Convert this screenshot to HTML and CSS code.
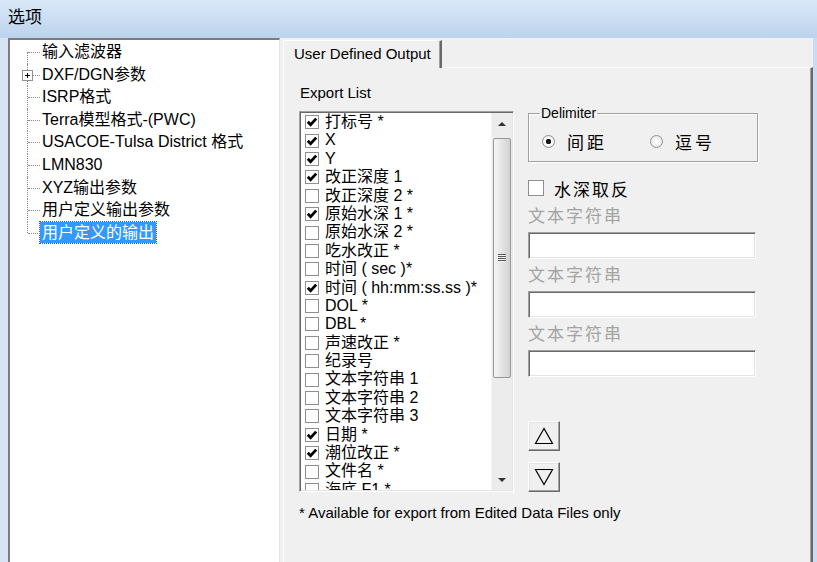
FILE: index.html
```html
<!DOCTYPE html>
<html lang="zh">
<head>
    <meta charset="UTF-8">
    <title>选项</title>
    <link rel="stylesheet" href="styles.css">
</head>
<body>
<div class="window">
    <div class="titlebar">选项</div>

    <div class="client">
        <!-- Options tree -->
        <div class="tree">
            <ul class="tree-list">
                <li>输入滤波器</li>
                <li><span class="expander"></span>DXF/DGN参数</li>
                <li>ISRP格式</li>
                <li>Terra模型格式-(PWC)</li>
                <li>USACOE-Tulsa District 格式</li>
                <li>LMN830</li>
                <li>XYZ输出参数</li>
                <li>用户定义输出参数</li>
                <li><span class="selected">用户定义的输出</span></li>
            </ul>
        </div>

        <!-- Tab control -->
        <div class="tabs">
            <div class="tab-strip">
                <div class="tab">User Defined Output</div>
            </div>
            <div class="tab-page">
                <div class="page-body">
                    <div class="export-col">
                        <div class="group-label">Export List</div>
                        <div class="listbox">
                            <ul class="check-list">
                                <li><span class="cb on"><svg viewBox="0 0 12 12"><path d="M1.8 5.8 L4.6 8.8 L10.2 2.6"/></svg></span>打标号 *</li>
                                <li><span class="cb on"><svg viewBox="0 0 12 12"><path d="M1.8 5.8 L4.6 8.8 L10.2 2.6"/></svg></span>X</li>
                                <li><span class="cb on"><svg viewBox="0 0 12 12"><path d="M1.8 5.8 L4.6 8.8 L10.2 2.6"/></svg></span>Y</li>
                                <li><span class="cb on"><svg viewBox="0 0 12 12"><path d="M1.8 5.8 L4.6 8.8 L10.2 2.6"/></svg></span>改正深度 1</li>
                                <li><span class="cb"></span>改正深度 2 *</li>
                                <li><span class="cb on"><svg viewBox="0 0 12 12"><path d="M1.8 5.8 L4.6 8.8 L10.2 2.6"/></svg></span>原始水深 1 *</li>
                                <li><span class="cb"></span>原始水深 2 *</li>
                                <li><span class="cb"></span>吃水改正 *</li>
                                <li><span class="cb"></span>时间 ( sec )*</li>
                                <li><span class="cb on"><svg viewBox="0 0 12 12"><path d="M1.8 5.8 L4.6 8.8 L10.2 2.6"/></svg></span>时间 ( hh:mm:ss.ss )*</li>
                                <li><span class="cb"></span>DOL *</li>
                                <li><span class="cb"></span>DBL *</li>
                                <li><span class="cb"></span>声速改正 *</li>
                                <li><span class="cb"></span>纪录号</li>
                                <li><span class="cb"></span>文本字符串 1</li>
                                <li><span class="cb"></span>文本字符串 2</li>
                                <li><span class="cb"></span>文本字符串 3</li>
                                <li><span class="cb on"><svg viewBox="0 0 12 12"><path d="M1.8 5.8 L4.6 8.8 L10.2 2.6"/></svg></span>日期 *</li>
                                <li><span class="cb on"><svg viewBox="0 0 12 12"><path d="M1.8 5.8 L4.6 8.8 L10.2 2.6"/></svg></span>潮位改正 *</li>
                                <li><span class="cb"></span>文件名 *</li>
                                <li><span class="cb"></span>海底 F1 *</li>
                            </ul>
                            <div class="scrollbar">
                                <div class="sb-btn"><span class="arrow-up"></span></div>
                                <div class="sb-track">
                                    <div class="sb-thumb"><span class="grip"></span></div>
                                </div>
                                <div class="sb-btn"><span class="arrow-down"></span></div>
                            </div>
                        </div>
                    </div>

                    <div class="side-col">
                        <fieldset class="delimiter">
                            <legend>Delimiter</legend>
                            <div class="radio-row">
                                <div class="option first"><span class="radio on"></span>间距</div>
                                <div class="option"><span class="radio"></span>逗号</div>
                            </div>
                        </fieldset>

                        <div class="check-row"><span class="cb big"></span>水深取反</div>

                        <div class="field">
                            <div class="field-label">文本字符串</div>
                            <div class="textbox"></div>
                        </div>
                        <div class="field">
                            <div class="field-label">文本字符串</div>
                            <div class="textbox"></div>
                        </div>
                        <div class="field">
                            <div class="field-label">文本字符串</div>
                            <div class="textbox"></div>
                        </div>

                        <div class="move-buttons">
                            <button class="move-btn"><svg viewBox="0 0 20 18"><path d="M10 1.5 L1.5 16.5 L18.5 16.5 Z"/></svg></button>
                            <button class="move-btn"><svg viewBox="0 0 20 18"><path d="M10 16.5 L1.5 1.5 L18.5 1.5 Z"/></svg></button>
                        </div>
                    </div>
                </div>

                <p class="note">* Available for export from Edited Data Files only</p>
            </div>
        </div>
    </div>
</div>
</body>
</html>
```

FILE: styles.css
```css
/* General */
* {
    box-sizing: border-box;
}
body {
    margin: 0;
    font-family: "Liberation Sans", "Noto Sans CJK SC", sans-serif;
    color: #000;
    background: #c9dcf1;
    overflow: hidden;
}
.window {
    width: 817px;
    height: 562px;
    display: flex;
    flex-direction: column;
    background: linear-gradient(to right, #d6e4f3, #c3d8ef 40%, #c9dcf1);
}
/* Title bar */
.titlebar {
    height: 38px;
    padding-left: 8px;
    font-size: 17px;
    line-height: 36px;
    background: linear-gradient(#d9e8f8, #bcd3ed);
}
.client {
    flex: 1;
    display: flex;
    margin: 0 4px 0 8px;
    background: #f0f0f0;
}
/* Tree */
.tree {
    width: 272px;
    background: #fff;
    border-top: 2px solid #7c7c7c;
    border-left: 2px solid #7c7c7c;
    border-right: 1px solid #e3e3e3;
    padding-top: 1px;
}
.tree-list {
    list-style: none;
    margin: 0;
    padding: 0;
    font-size: 16px;
}
.tree-list li {
    position: relative;
    height: 22.6px;
    line-height: 22.6px;
    padding-left: 32px;
    white-space: nowrap;
}
.tree-list li::before {
    content: "";
    position: absolute;
    left: 17px;
    top: 0;
    bottom: 0;
    border-left: 1px dotted #8a8a8a;
}
.tree-list li::after {
    content: "";
    position: absolute;
    left: 18px;
    width: 12px;
    top: 11px;
    border-top: 1px dotted #8a8a8a;
}
.tree-list li:first-child::before {
    top: 11px;
}
.tree-list li:last-child::before {
    bottom: 11px;
}
.expander {
    position: absolute;
    left: 12px;
    top: 6px;
    width: 11px;
    height: 11px;
    z-index: 1;
    border: 1px solid #919191;
    background:
        linear-gradient(#000, #000) center / 5px 1px no-repeat,
        linear-gradient(#000, #000) center / 1px 5px no-repeat,
        #fff;
}
.selected {
    display: inline-block;
    margin-left: -2px;
    padding: 0 2px;
    line-height: 21px;
    color: #fff;
    background: #3399ff;
    outline: 1px dotted #7a5020;
}
/* Tabs */
.tabs {
    flex: 1;
    display: flex;
    flex-direction: column;
    margin-left: 3px;
}
.tab-strip {
    height: 29px;
    display: flex;
    align-items: flex-end;
}
.tab {
    position: relative;
    z-index: 1;
    width: 159px;
    height: 28px;
    margin-bottom: -1px;
    padding-left: 10px;
    font-size: 15px;
    line-height: 26px;
    background: #f0f0f0;
    border-top: 1px solid #fff;
    border-left: 1px solid #fff;
    border-right: 2px solid #696969;
    box-shadow: inset -1px 0 0 #a0a0a0;
}
.tab-page {
    flex: 1;
    padding: 16px 0 0 15px;
    border-top: 1px solid #fff;
    border-left: 1px solid #fff;
    border-right: 2px solid #696969;
    box-shadow: inset -1px 0 0 #a0a0a0;
}
.page-body {
    display: flex;
    gap: 14px;
}
/* Export list */
.export-col {
    width: 215px;
}
.group-label {
    padding-left: 1px;
    font-size: 15px;
    line-height: 18px;
}
.listbox {
    display: flex;
    height: 381px;
    margin-top: 9px;
    padding: 1px;
    background: #fff;
    border: 1px solid;
    border-color: #a0a0a0 #fff #fff #a0a0a0;
    box-shadow: inset 1px 1px 0 #696969, inset -1px -1px 0 #e3e3e3;
}
.check-list {
    flex: 1;
    list-style: none;
    margin: 0;
    padding: 0 0 0 4px;
    overflow: hidden;
    font-size: 16px;
}
.check-list li {
    display: flex;
    align-items: center;
    gap: 6px;
    height: 18.4px;
    line-height: 18.4px;
    white-space: nowrap;
}
.cb {
    flex: none;
    width: 14px;
    height: 14px;
    border: 1px solid #8e8f8f;
    background: #fff;
}
.cb svg {
    display: block;
    width: 12px;
    height: 12px;
}
.cb path {
    fill: none;
    stroke: #000;
    stroke-width: 2.8;
}
/* Scrollbar */
.scrollbar {
    width: 21px;
    display: flex;
    flex-direction: column;
    background: #ececec;
    border-left: 1px solid #f4f4f4;
}
.sb-btn {
    height: 21px;
    display: flex;
    align-items: center;
    justify-content: center;
}
.arrow-up {
    border-left: 4px solid transparent;
    border-right: 4px solid transparent;
    border-bottom: 4px solid #333;
}
.arrow-down {
    border-left: 4px solid transparent;
    border-right: 4px solid transparent;
    border-top: 4px solid #333;
}
.sb-track {
    flex: 1;
    padding: 4px 1px 0;
}
.sb-thumb {
    height: 240px;
    display: flex;
    align-items: center;
    justify-content: center;
    border: 1px solid #979797;
    border-radius: 2px;
    background: linear-gradient(to right, #f5f5f5, #e4e4e4 50%, #d2d2d2);
}
.grip {
    width: 8px;
    height: 8px;
    background: repeating-linear-gradient(#555 0 1px, #f4f4f4 1px 2px);
}
/* Right column */
.side-col {
    width: 230px;
    padding-top: 21px;
}
.delimiter {
    margin: 0;
    padding: 10px 0 10px 13px;
    min-width: 0;
    border: 1px solid #a0a0a0;
    box-shadow: inset 1px 1px 0 #fff, 1px 1px 0 #fff;
}
.delimiter legend {
    margin-left: -2px;
    padding: 0 1px;
    font-size: 14px;
    line-height: 16px;
}
.radio-row {
    display: flex;
    height: 20px;
    align-items: center;
}
.option {
    display: flex;
    align-items: center;
    gap: 12px;
    font-size: 17px;
    letter-spacing: 3px;
}
.option.first {
    width: 108px;
}
.radio {
    width: 13px;
    height: 13px;
    border-radius: 50%;
    border: 1px solid #8f8f8f;
    background: radial-gradient(circle, #fff, #e2e2e2);
}
.radio.on {
    background: radial-gradient(circle, #1a1a1a 0 2.5px, #fff 3px, #e2e2e2);
}
.check-row {
    display: flex;
    align-items: center;
    gap: 10px;
    margin-top: 16px;
    height: 20px;
    font-size: 17px;
    letter-spacing: 2px;
}
.cb.big {
    width: 16px;
    height: 16px;
}
.field-label {
    margin-top: 9px;
    font-size: 17px;
    line-height: 20px;
    letter-spacing: 2px;
    color: #a3a3a3;
}
.field + .field .field-label {
    margin-top: 7px;
}
.textbox {
    width: 228px;
    height: 27px;
    margin-top: 5px;
    background: #fff;
    border: 1px solid;
    border-color: #a0a0a0 #fff #fff #a0a0a0;
    box-shadow: inset 1px 1px 0 #696969, inset -1px -1px 0 #e3e3e3;
}
/* Move buttons */
.move-buttons {
    display: flex;
    flex-direction: column;
    gap: 11px;
    margin-top: 44px;
}
.move-btn {
    width: 32px;
    height: 30px;
    padding: 0;
    display: flex;
    align-items: center;
    justify-content: center;
    background: #f0f0f0;
    border: 1px solid;
    border-color: #fff #696969 #696969 #fff;
    box-shadow: inset -1px -1px 0 #a0a0a0, inset 1px 1px 0 #e3e3e3;
}
.move-btn svg {
    width: 20px;
    height: 18px;
}
.move-btn path {
    fill: none;
    stroke: #000;
    stroke-width: 1.2;
}
/* Footnote */
.note {
    margin: 12px 0 0;
    font-size: 15px;
    line-height: 17px;
    white-space: nowrap;
}
```
